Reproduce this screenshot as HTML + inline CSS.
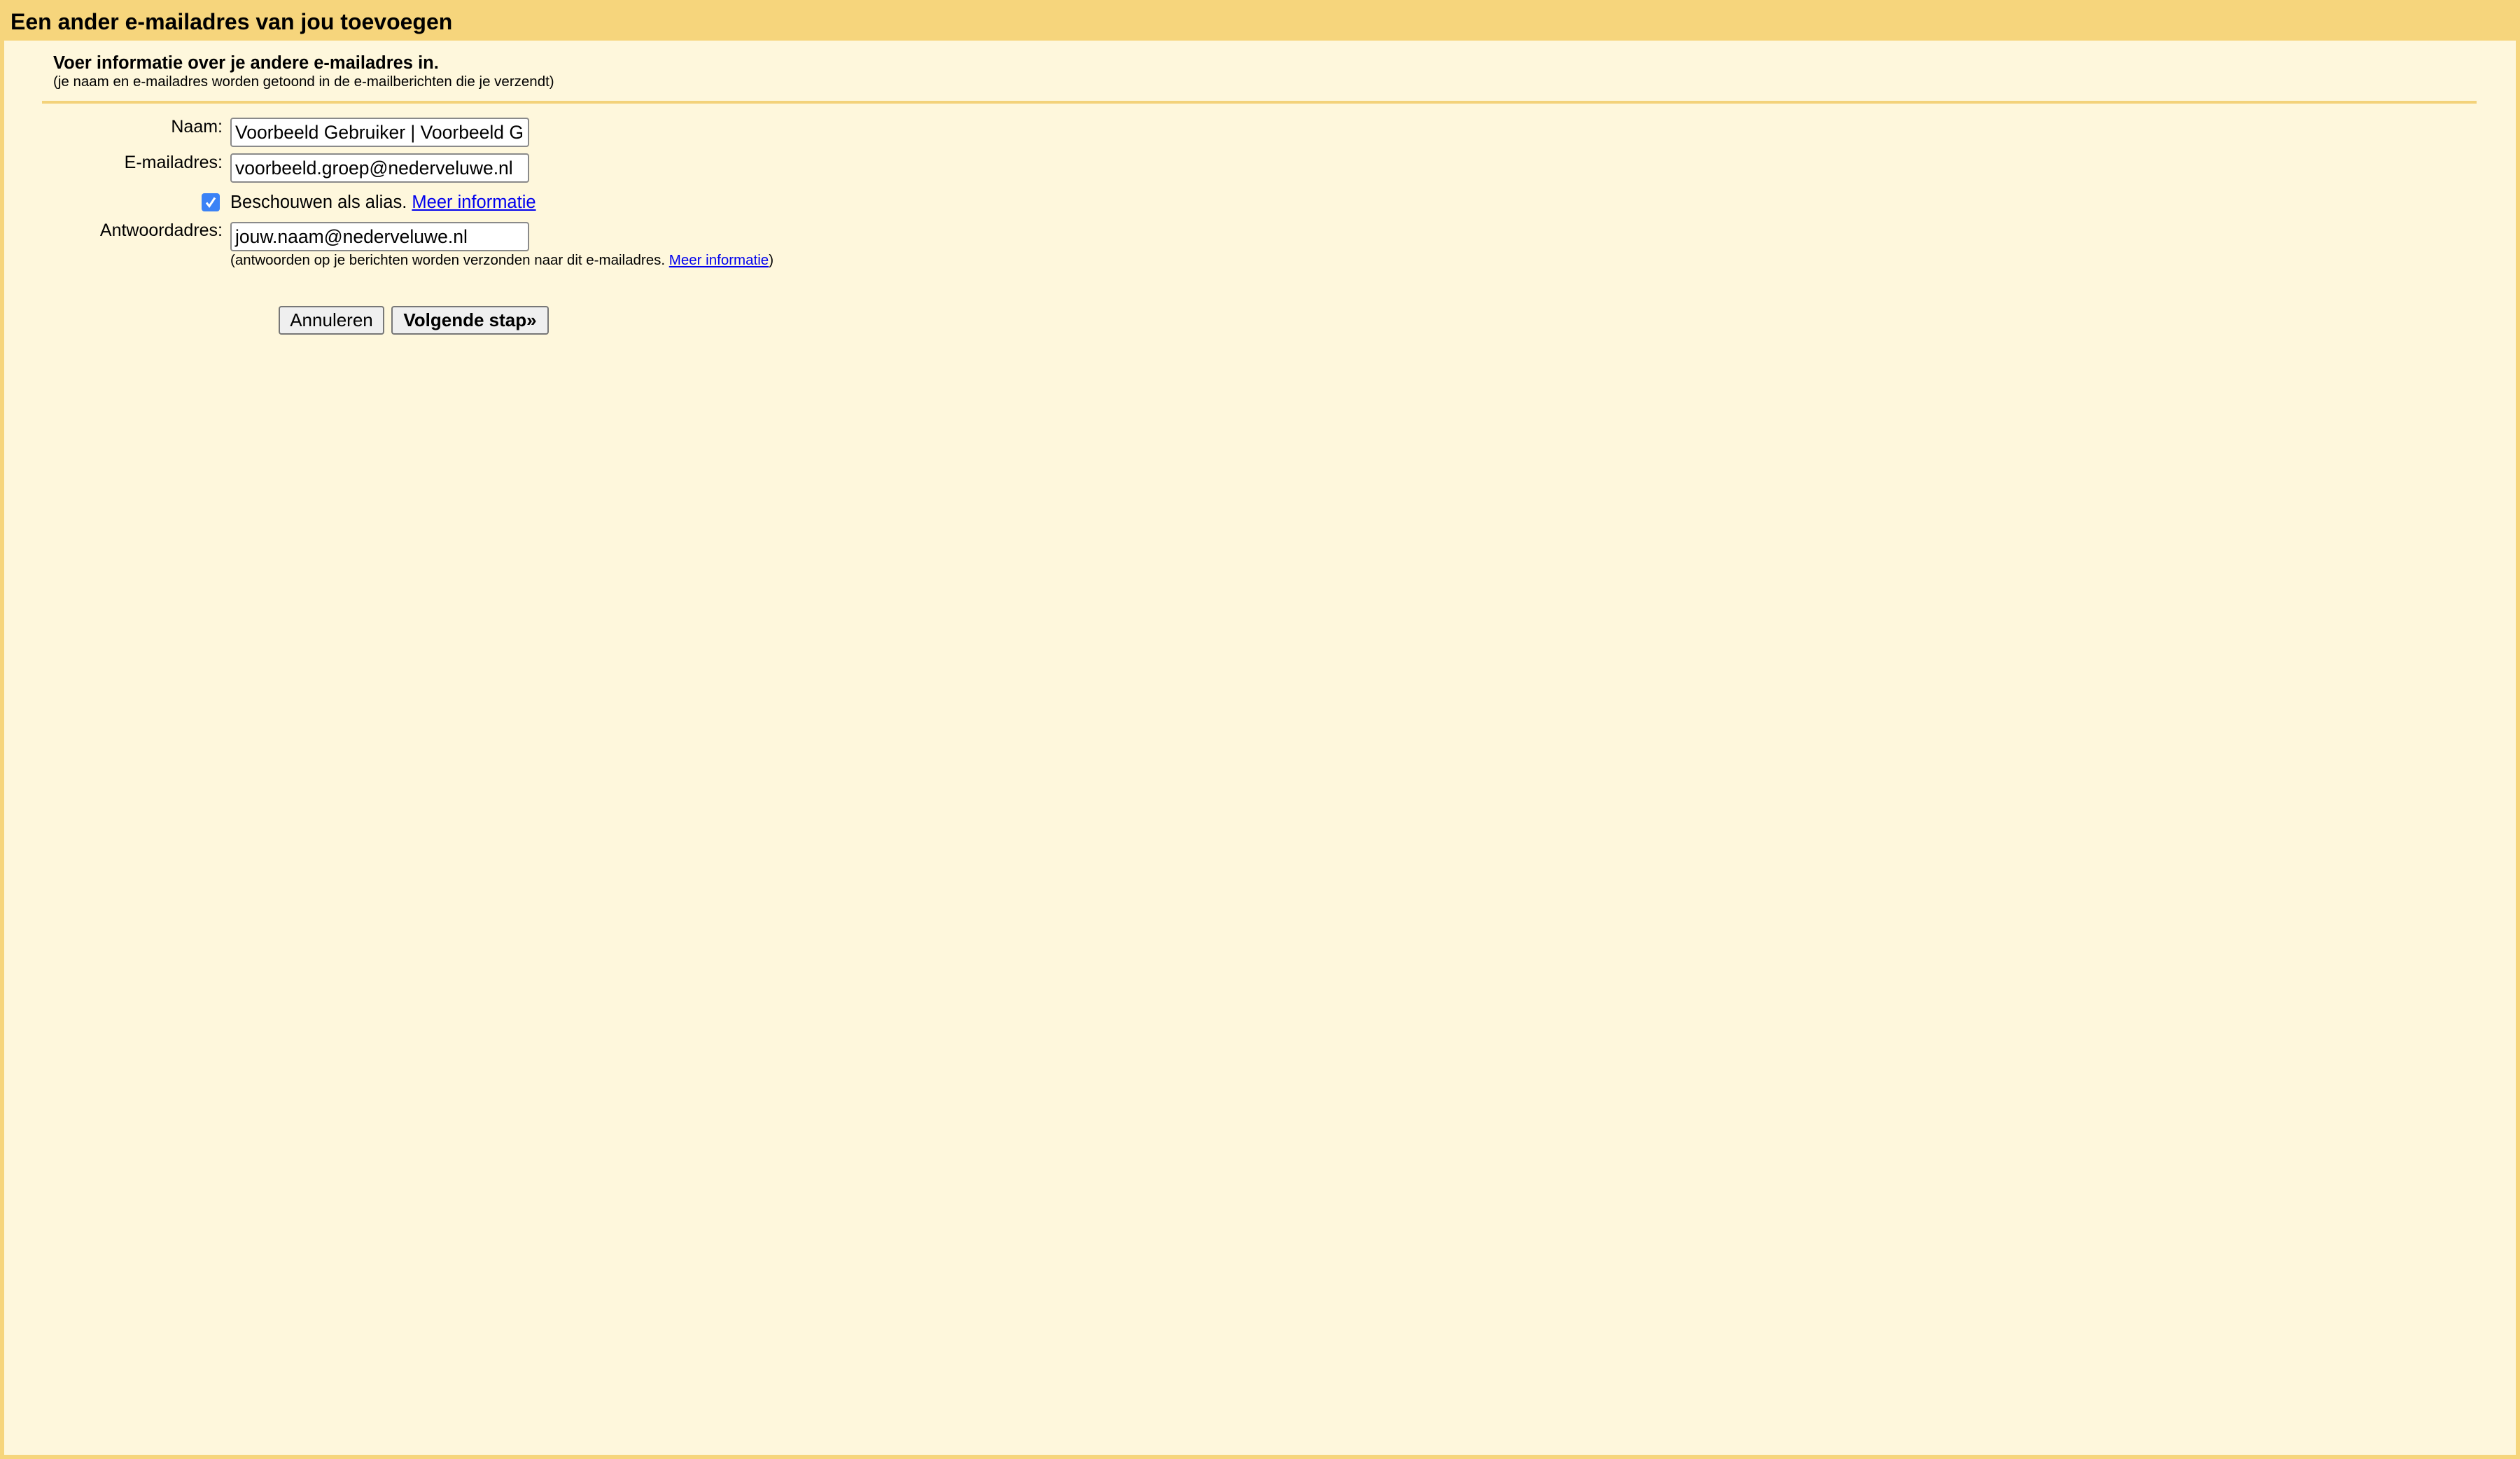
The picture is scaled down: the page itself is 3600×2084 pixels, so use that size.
<!DOCTYPE html>
<html><head><meta charset="utf-8"><style>
html,body{margin:0;padding:0;}
body{width:3600px;height:2084px;background:#f6d57c;font-family:"Liberation Sans",Arial,sans-serif;position:relative;overflow:hidden;color:#000;}
.hdr{position:absolute;left:15px;top:13px;font-size:32px;font-weight:bold;}
.main{position:absolute;left:6px;top:58px;width:3588px;height:2020px;background:#fef7dc;}
.a{position:absolute;white-space:nowrap;}
.inp{position:absolute;left:329px;height:38px;border:2px solid #8a8a8a;border-radius:4px;background:#fff;font-size:26.5px;line-height:38px;padding-left:5px;box-sizing:content-box;width:418px;overflow:hidden;white-space:nowrap;}
.lbl{position:absolute;right:3282px;font-size:25px;text-align:right;white-space:nowrap;}
.btn{position:absolute;top:437px;height:37px;border:2px solid #777;border-radius:4px;background:#efefef;font-size:26px;line-height:37px;text-align:center;}
a{color:#0000ee;text-decoration:underline;}
</style></head><body>
<div class="hdr">Een ander e-mailadres van jou toevoegen</div>
<div class="main"></div>
<div class="a" style="left:76px;top:76px;font-size:25.5px;font-weight:bold;">Voer informatie over je andere e-mailadres in.</div>
<div class="a" style="left:76px;top:105px;font-size:20.5px;">(je naam en e-mailadres worden getoond in de e-mailberichten die je verzendt)</div>
<div style="position:absolute;left:60px;top:144px;width:3478px;height:4px;background:#f3d27a;"></div>

<div class="lbl" style="top:167px;">Naam:</div>
<div class="inp" style="top:168px;">Voorbeeld Gebruiker | Voorbeeld G</div>
<div class="lbl" style="top:218px;">E-mailadres:</div>
<div class="inp" style="top:219px;">voorbeeld.groep@nederveluwe.nl</div>

<div style="position:absolute;left:288px;top:276px;width:26px;height:26px;background:#3b82f6;border-radius:4px;">
<svg width="26" height="26" viewBox="0 0 26 26"><path d="M7 13.5 L11 18.5 L19 6.5" stroke="#fff" stroke-width="3" fill="none"/></svg></div>
<div class="a" style="left:329px;top:275px;font-size:25.5px;">Beschouwen als alias. <a>Meer informatie</a></div>

<div class="lbl" style="top:315px;">Antwoordadres:</div>
<div class="inp" style="top:317px;">jouw.naam@nederveluwe.nl</div>
<div class="a" style="left:329px;top:360px;font-size:20.5px;">(antwoorden op je berichten worden verzonden naar dit e-mailadres. <a>Meer informatie</a>)</div>

<div class="btn" style="left:398px;width:147px;">Annuleren</div>
<div class="btn" style="left:559px;width:221px;font-weight:bold;">Volgende stap»</div>
</body></html>
